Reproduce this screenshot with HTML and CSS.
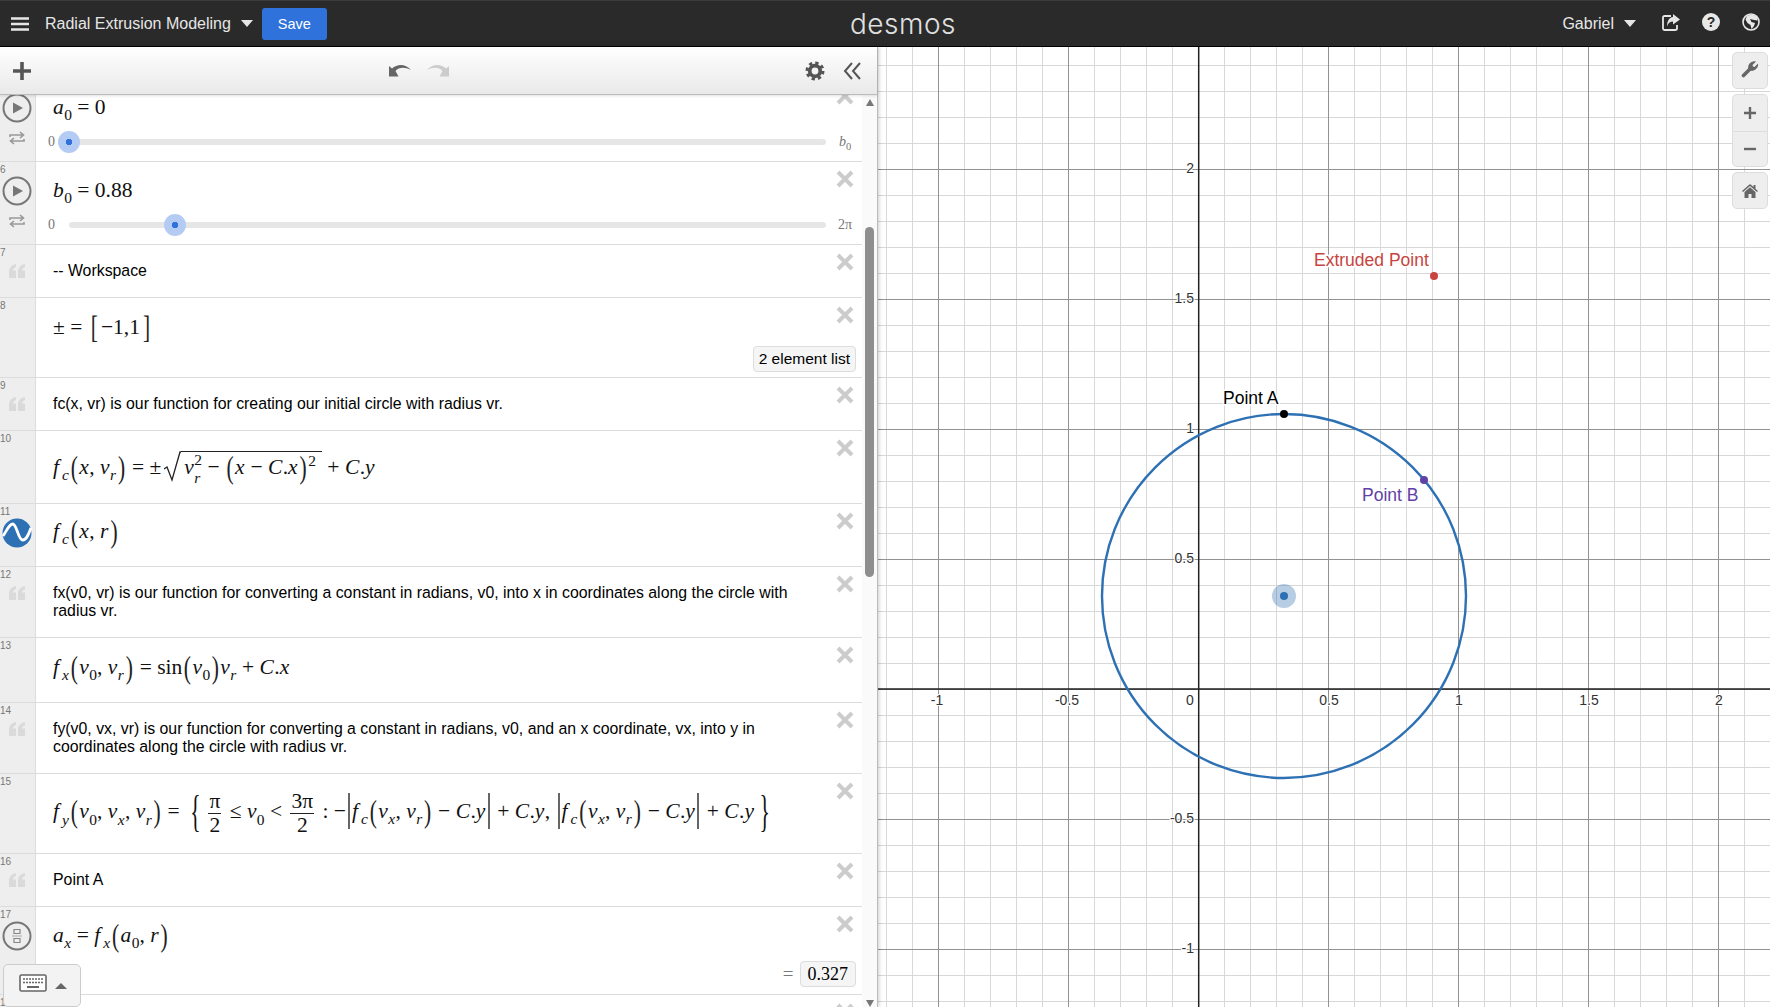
FILE: index.html
```html
<!DOCTYPE html>
<html lang="en">
<head>
  <meta charset="UTF-8" />
  <title>Radial Extrusion Modeling</title>
  <link rel="stylesheet" href="styles.css">
</head>
<body>
  <svg class="defs" width="0" height="0">
    <symbol id="i-x" viewBox="0 0 18 18"><path d="M2 2L16 16M16 2L2 16" fill="none" stroke="#ccc" stroke-width="4"/></symbol>
    <symbol id="i-quote" viewBox="0 0 16 14"><path d="M0 14V8C0 4 2 1 7 0V3C5 4 4 5 4 6.500H7V14ZM9 14V8C9 4 11 1 16 0V3C14 4 13 5 13 6.500H16V14Z" fill="#dadada"/></symbol>
    <symbol id="i-play" viewBox="0 0 30 30"><circle cx="15" cy="15" r="13.500" fill="none" stroke="#777" stroke-width="2"/><path d="M11 9.500L21 15L11 20.500Z" fill="#777"/></symbol>
    <symbol id="i-loop" viewBox="0 0 16 14"><path d="M1 6V4H14M11 1L14.500 4L11 7M15 8V10H2M5 7L1.500 10L5 13" fill="none" stroke="#999" stroke-width="1.600"/></symbol>
  </svg>

  <!-- top bar -->
  <header class="topbar">
    <div class="topbar-left">
      <svg class="icon-menu" width="18" height="14" viewBox="0 0 18 14"><path d="M0 1.500H18M0 7H18M0 12.500H18" stroke="#e6e6e6" stroke-width="2.400"/></svg>
      <span class="doc-title">Radial Extrusion Modeling</span>
      <span class="caret"></span>
      <button class="save-btn">Save</button>
    </div>
    <div class="logo">desmos</div>
    <div class="topbar-right">
      <span class="user-name">Gabriel</span>
      <span class="caret"></span>
      <svg class="top-icon share" width="18" height="18" viewBox="0 0 18 18"><path d="M9 3H2.500C1.700 3 1 3.700 1 4.500V15.500C1 16.300 1.700 17 2.500 17H13C14 17 15 16.300 15 15.500V12" fill="none" stroke="#e6e6e6" stroke-width="1.800"/><path d="M11 1L18 6.500L11 11.500V8.500C8 8.500 6 10 5 13.500C5 8 7 4.500 11 4Z" fill="#e6e6e6"/></svg>
      <svg class="top-icon" width="18" height="18" viewBox="0 0 18 18"><circle cx="9" cy="9" r="9" fill="#e8e8e8"/><text x="9" y="14" class="help-mark">?</text></svg>
      <svg class="top-icon" width="18" height="18" viewBox="0 0 18 18"><circle cx="9" cy="9" r="8" fill="#2a2a2a" stroke="#e8e8e8" stroke-width="1.600"/><path d="M5 2.500L11 1.500L15 4L15.500 7.500L12 7L8 6L9.500 9L13 10L12 13L9.500 16L8.500 12L5.500 10L3.500 6.500Z" fill="#e8e8e8"/></svg>
    </div>
  </header>

  <main class="app">
    <!-- expression panel -->
    <section class="panel">
      <div class="panel-toolbar">
        <svg class="tool-add" width="18" height="18" viewBox="0 0 18 18"><path d="M9 0V18M0 9H18" stroke="#555" stroke-width="3.600"/></svg>
        <div class="tool-history">
          <svg width="22" height="14" viewBox="0 0 22 14"><path d="M0 13.500V3L3 5.500C8 1 16 0 22 7C16 4 10 4 6.500 8L9.500 13.500Z" fill="#666"/></svg>
          <svg width="22" height="14" viewBox="0 0 22 14"><path d="M22 13.500V3L19 5.500C14 1 6 0 0 7C6 4 12 4 15.500 8L12.500 13.500Z" fill="#ccc"/></svg>
        </div>
        <svg class="tool-gear" width="20" height="20" viewBox="0 0 20 20"><circle cx="10" cy="10" r="5.300" fill="none" stroke="#555" stroke-width="3.800"/><circle cx="10" cy="10" r="8" fill="none" stroke="#555" stroke-width="3" stroke-dasharray="3.300 2.980"/></svg>
        <svg class="tool-collapse" width="18" height="18" viewBox="0 0 18 18"><path d="M9 1L2 9L9 17M17 1L10 9L17 17" fill="none" stroke="#555" stroke-width="2"/></svg>
      </div>

      <div class="panel-body">
        <div class="expr-list">
          <div class="expr-scroll">

            <div class="expr h83">
              <div class="gutter"><svg class="ico-circle" width="30" height="30"><use href="#i-play"/></svg><svg class="ico-loop" width="16" height="14"><use href="#i-loop"/></svg></div>
              <div class="content slider-expr">
                <div class="math"><i>a</i><sub>0</sub><span class="op">=</span>0</div>
                <div class="slider">
                  <span class="slider-min">0</span>
                  <div class="track"><span class="handle first"></span></div>
                  <span class="slider-max"><i>b</i><sub>0</sub></span>
                </div>
              </div>
              <svg class="del"><use href="#i-x"/></svg>
            </div>

            <div class="expr h83">
              <div class="gutter"><span class="num">6</span><svg class="ico-circle" width="30" height="30"><use href="#i-play"/></svg><svg class="ico-loop" width="16" height="14"><use href="#i-loop"/></svg></div>
              <div class="content slider-expr">
                <div class="math"><i>b</i><sub>0</sub><span class="op">=</span>0.88</div>
                <div class="slider">
                  <span class="slider-min">0</span>
                  <div class="track"><span class="handle" style="left: 14%"></span></div>
                  <span class="slider-max">2π</span>
                </div>
              </div>
              <svg class="del"><use href="#i-x"/></svg>
            </div>

            <div class="expr h53">
              <div class="gutter"><span class="num">7</span><svg class="ico-quote" width="16" height="14"><use href="#i-quote"/></svg></div>
              <div class="content note">-- Workspace</div>
              <svg class="del"><use href="#i-x"/></svg>
            </div>

            <div class="expr h80">
              <div class="gutter"><span class="num">8</span></div>
              <div class="content list-expr">
                <div class="math">±<span class="op">=</span><span class="tall bracket">[</span>−1,1<span class="tall bracket">]</span></div>
                <div class="output"><span class="badge badge-text">2 element list</span></div>
              </div>
              <svg class="del"><use href="#i-x"/></svg>
            </div>

            <div class="expr h53">
              <div class="gutter"><span class="num">9</span><svg class="ico-quote" width="16" height="14"><use href="#i-quote"/></svg></div>
              <div class="content note">fc(x, vr) is our function for creating our initial circle with radius vr.</div>
              <svg class="del"><use href="#i-x"/></svg>
            </div>

            <div class="expr h73">
              <div class="gutter"><span class="num">10</span></div>
              <div class="content">
                <div class="math"><i class="fn">f</i><sub><i>c</i></sub><span class="tall">(</span><i>x</i>, <i>v</i><sub><i>r</i></sub><span class="tall">)</span><span class="op">=</span>±<span class="sqrt"><svg class="radical" width="17" height="32" viewBox="0 0 17 32"><path d="M0 18L3 16L8 29L16 1H17" fill="none" stroke="#222" stroke-width="1.300"/></svg><span class="radicand"><i>v</i><span class="subsup"><span>2</span><span><i>r</i></span></span><span class="op">−</span><span class="tall">(</span><i>x</i><span class="op">−</span><i>C</i>.<i>x</i><span class="tall">)</span><sup>2</sup></span></span><span class="op">+</span><i>C</i>.<i>y</i></div>
              </div>
              <svg class="del"><use href="#i-x"/></svg>
            </div>

            <div class="expr h63">
              <div class="gutter"><span class="num">11</span>
                <svg class="ico-circle" width="30" height="30" viewBox="0 0 30 30"><circle cx="15" cy="15" r="14.500" fill="#2d70b3"/><path d="M1 18C4 14 7 6 10.700 6C15 6 16 22 20.700 22C25 22 27 15 29 10" fill="none" stroke="#fff" stroke-width="2.800"/></svg>
              </div>
              <div class="content lift-8">
                <div class="math"><i class="fn">f</i><sub><i>c</i></sub><span class="tall">(</span><i>x</i>, <i>r</i><span class="tall">)</span></div>
              </div>
              <svg class="del"><use href="#i-x"/></svg>
            </div>

            <div class="expr h71">
              <div class="gutter"><span class="num">12</span><svg class="ico-quote" width="16" height="14"><use href="#i-quote"/></svg></div>
              <div class="content note">fx(v0, vr) is our function for converting a constant in radians, v0, into x in coordinates along the circle with radius vr.</div>
              <svg class="del"><use href="#i-x"/></svg>
            </div>

            <div class="expr h65">
              <div class="gutter"><span class="num">13</span></div>
              <div class="content lift-6">
                <div class="math"><i class="fn">f</i><sub><i>x</i></sub><span class="tall">(</span><i>v</i><sub>0</sub>, <i>v</i><sub><i>r</i></sub><span class="tall">)</span><span class="op">=</span>sin<span class="tall">(</span><i>v</i><sub>0</sub><span class="tall">)</span><i>v</i><sub><i>r</i></sub><span class="op">+</span><i>C</i>.<i>x</i></div>
              </div>
              <svg class="del"><use href="#i-x"/></svg>
            </div>

            <div class="expr h71">
              <div class="gutter"><span class="num">14</span><svg class="ico-quote" width="16" height="14"><use href="#i-quote"/></svg></div>
              <div class="content note">fy(v0, vx, vr) is our function for converting a constant in radians, v0, and an x coordinate, vx, into y in coordinates along the circle with radius vr.</div>
              <svg class="del"><use href="#i-x"/></svg>
            </div>

            <div class="expr h80">
              <div class="gutter"><span class="num">15</span></div>
              <div class="content">
                <div class="math"><i class="fn">f</i><sub><i>y</i></sub><span class="tall">(</span><i>v</i><sub>0</sub>, <i>v</i><sub><i>x</i></sub>, <i>v</i><sub><i>r</i></sub><span class="tall">)</span><span class="op">=</span><span class="brace">{</span><span class="frac"><span>π</span><span>2</span></span><span class="op">≤</span><i>v</i><sub>0</sub><span class="op">&lt;</span><span class="frac"><span>3π</span><span>2</span></span><span class="op">:</span>−<span class="abs"><i class="fn">f</i><sub><i>c</i></sub><span class="tall">(</span><i>v</i><sub><i>x</i></sub>, <i>v</i><sub><i>r</i></sub><span class="tall">)</span><span class="op">−</span><i>C</i>.<i>y</i></span><span class="op">+</span><i>C</i>.<i>y</i>, <span class="abs"><i class="fn">f</i><sub><i>c</i></sub><span class="tall">(</span><i>v</i><sub><i>x</i></sub>, <i>v</i><sub><i>r</i></sub><span class="tall">)</span><span class="op">−</span><i>C</i>.<i>y</i></span><span class="op">+</span><i>C</i>.<i>y</i><span class="brace">}</span></div>
              </div>
              <svg class="del"><use href="#i-x"/></svg>
            </div>

            <div class="expr h53">
              <div class="gutter"><span class="num">16</span><svg class="ico-quote" width="16" height="14"><use href="#i-quote"/></svg></div>
              <div class="content note">Point A</div>
              <svg class="del"><use href="#i-x"/></svg>
            </div>

            <div class="expr h88">
              <div class="gutter"><span class="num">17</span>
                <svg class="ico-circle" width="30" height="30" viewBox="0 0 30 30"><circle cx="15" cy="15" r="13.500" fill="none" stroke="#777" stroke-width="2"/><path d="M12 8.500H18V12.500H12ZM12 17.500H18V21.500H12Z" fill="none" stroke="#888" stroke-width="1.200"/><path d="M10 15H20" stroke="#aaa" stroke-width="1"/></svg>
              </div>
              <div class="content list-expr value-expr">
                <div class="math"><i>a</i><sub><i>x</i></sub><span class="op">=</span><i class="fn">f</i><sub><i>x</i></sub><span class="tall">(</span><i>a</i><sub>0</sub>, <i>r</i><span class="tall">)</span></div>
                <div class="output"><span class="equals">=</span><span class="badge badge-num">0.327</span></div>
              </div>
              <svg class="del"><use href="#i-x"/></svg>
            </div>

            <div class="expr h53">
              <div class="gutter"><span class="num">18</span></div>
              <div class="content"></div>
              <svg class="del"><use href="#i-x"/></svg>
            </div>

          </div>
          <button class="keyboard-btn">
            <svg class="kb-icon" width="28" height="18" viewBox="0 0 28 18"><rect x="1" y="1" width="26" height="16" rx="1.500" fill="#fff" stroke="#666" stroke-width="1.600"/><path d="M4 5H24M4 8.500H24" stroke="#666" stroke-width="1.600" stroke-dasharray="2 1"/><path d="M8 13H20" stroke="#666" stroke-width="2"/></svg>
            <span class="keyboard-caret"></span>
          </button>
        </div>

        <div class="scrollbar">
          <span class="arrow-up"></span>
          <span class="thumb"></span>
          <span class="arrow-down"></span>
        </div>
      </div>
    </section>

    <!-- graph paper -->
    <section class="graph">
      <svg class="paper" viewBox="878 47 892 960" width="892" height="960">
        <defs>
          <pattern id="minor" patternUnits="userSpaceOnUse" x="1198" y="689" width="26" height="26"><path d="M0.500 0V26M0 0.500H26" fill="none" stroke="#d8d8d8"/></pattern>
          <pattern id="major" patternUnits="userSpaceOnUse" x="1198" y="689" width="130" height="130"><path d="M0.500 0V130M0 0.500H130" fill="none" stroke="#929292"/></pattern>
        </defs>
        <rect x="878" y="47" width="892" height="960" fill="#fff"/>
        <rect x="878" y="47" width="892" height="960" fill="url(#minor)"/>
        <rect x="878" y="47" width="892" height="960" fill="url(#major)"/>
        <path d="M1198.700 47V1007M878 689H1770" stroke="#222" stroke-width="1.500"/>

        <g class="tick tick-y">
          <text x="1194" y="173">2</text>
          <text x="1194" y="303">1.5</text>
          <text x="1194" y="433">1</text>
          <text x="1194" y="563">0.5</text>
          <text x="1194" y="823">-0.5</text>
          <text x="1194" y="953">-1</text>
        </g>
        <g class="tick tick-x">
          <text x="937" y="705">-1</text>
          <text x="1067" y="705">-0.5</text>
          <text x="1190" y="705">0</text>
          <text x="1329" y="705">0.5</text>
          <text x="1459" y="705">1</text>
          <text x="1589" y="705">1.5</text>
          <text x="1719" y="705">2</text>
        </g>

        <circle cx="1284" cy="596" r="182" fill="none" stroke="#2d70b3" stroke-width="2.400"/>
        <circle cx="1284" cy="596" r="12" fill="#2d70b3" opacity="0.35"/>
        <circle cx="1284" cy="596" r="4" fill="#2d70b3"/>
        <circle cx="1284" cy="414" r="4" fill="#000"/>
        <circle cx="1424" cy="480" r="4" fill="#6042a6"/>
        <circle cx="1434" cy="276" r="4" fill="#c74440"/>
        <text x="1223" y="404" class="pt-label">Point A</text>
        <text x="1362" y="501" class="pt-label label-b">Point B</text>
        <text x="1314" y="266" class="pt-label label-red">Extruded Point</text>
      </svg>

      <div class="graph-controls">
        <button class="ctl-btn">
          <svg class="wrench" width="18" height="18" viewBox="0 0 18 18"><path d="M2.500 15.500L9 9" stroke="#666" stroke-width="3.600" stroke-linecap="round"/><path d="M7.500 9.500C6 5 10 .5 15 1.500L11.500 5L12 6.500L13.500 7L17 3.500C18 8 13 12 8.500 10.500Z" fill="#666"/></svg>
        </button>
        <div class="ctl-group">
          <button class="ctl-btn"><svg width="12" height="12" viewBox="0 0 12 12"><path d="M6 0V12M0 6H12" stroke="#666" stroke-width="2.400"/></svg></button>
          <button class="ctl-btn"><svg width="12" height="12" viewBox="0 0 12 12"><path d="M0 6H12" stroke="#666" stroke-width="2.400"/></svg></button>
        </div>
        <button class="ctl-btn">
          <svg width="16" height="14" viewBox="0 0 16 14"><path d="M0 7L8 0L11.500 3V1H13.500V4.800L16 7L15 8L8 2L1 8Z" fill="#666"/><path d="M2.500 8L8 3.300L13.500 8V14H9.500V10H6.500V14H2.500Z" fill="#666"/></svg>
        </button>
      </div>
    </section>
  </main>
</body>
</html>
```

FILE: styles.css
```css
* {
  box-sizing: border-box;
}

html, body {
  margin: 0;
  height: 100%;
  overflow: hidden;
}

body {
  display: flex;
  flex-direction: column;
  font-family: "Liberation Sans", Arial, sans-serif;
  color: #000;
}

.defs {
  position: absolute;
}

button {
  font-family: inherit;
}

/* top bar */
.topbar {
  height: 47px;
  flex: none;
  display: flex;
  align-items: center;
  background: #2a2a2a;
  border-top: 1px solid #3c3c3c;
  border-bottom: 1px solid #000;
  color: #e6e6e6;
}

.topbar-left {
  width: 850px;
  padding-left: 11px;
  display: flex;
  align-items: center;
}

.doc-title {
  margin-left: 16px;
  font-size: 16px;
}

.caret {
  width: 0;
  height: 0;
  margin-left: 10px;
  border-left: 6.5px solid transparent;
  border-right: 6.5px solid transparent;
  border-top: 7px solid #e6e6e6;
}

.save-btn {
  width: 65px;
  height: 32px;
  margin-left: 9px;
  border: none;
  border-radius: 3px;
  background: #2f72dc;
  color: #fff;
  font-size: 14.5px;
}

.logo {
  font-family: Inter, sans-serif;
  font-size: 28px;
  font-weight: 350;
  letter-spacing: 0.5px;
  color: #e0e0e0;
  line-height: 1;
}

.topbar-right {
  margin-left: auto;
  padding-right: 10px;
  display: flex;
  align-items: center;
}

.user-name {
  font-size: 16px;
}

.top-icon {
  margin: -3px 0 0 22px;
}

.top-icon.share {
  margin-left: 26px;
}

.help-mark {
  font: bold 14px "Liberation Sans", sans-serif;
  text-anchor: middle;
  fill: #2a2a2a;
}

/* layout */
.app {
  flex: 1;
  min-height: 0;
  display: flex;
}

.panel {
  width: 878px;
  flex: none;
  display: flex;
  flex-direction: column;
  border-right: 1px solid #bbb;
  box-shadow: 1px 0 4px rgba(0, 0, 0, 0.2);
  z-index: 2;
  background: #fff;
}

.panel-toolbar {
  height: 48px;
  flex: none;
  position: relative;
  display: flex;
  align-items: center;
  padding: 0 16px 0 13px;
  background: linear-gradient(#fff, #e9e9e9);
  border-bottom: 1px solid #bbb;
  box-shadow: 0 1px 3px rgba(0, 0, 0, 0.12);
  z-index: 3;
}

.tool-history {
  display: flex;
  gap: 16px;
  margin-left: 358px;
  margin-top: -2px;
}

.tool-gear {
  margin-left: auto;
  margin-right: -1px;
}

.tool-collapse {
  margin-left: 19px;
}

.panel-body {
  flex: 1;
  min-height: 0;
  display: flex;
}

.expr-list {
  flex: 1;
  position: relative;
  overflow: hidden;
}

.expr-scroll {
  margin-top: -16px;
}

/* expression rows */
.expr {
  position: relative;
  display: flex;
  border-bottom: 1px solid #dcdcdc;
  overflow: hidden;
}

.h53 { height: 53px; }
.h63 { height: 63px; }
.h65 { height: 65px; }
.h71 { height: 71px; }
.h73 { height: 73px; }
.h80 { height: 80px; }
.h83 { height: 83px; }
.h88 { height: 88px; }

.gutter {
  width: 36px;
  flex: none;
  position: relative;
  display: flex;
  flex-direction: column;
  align-items: center;
  padding-top: 14px;
  background: #eee;
  border-right: 1px solid #ddd;
}

.num {
  position: absolute;
  left: 0;
  top: 2px;
  font-size: 10px;
  color: #777;
}

.ico-circle {
  display: block;
  margin-right: 2px;
}

.ico-loop {
  display: block;
  margin: 8px 2px 0 0;
}

.ico-quote {
  display: block;
  margin: 5px 1px 0 0;
}

.del {
  position: absolute;
  right: 8px;
  top: 8px;
  width: 18px;
  height: 18px;
}

.content {
  flex: 1;
  min-width: 0;
  padding: 0 6px 0 17px;
  display: flex;
  flex-direction: column;
  justify-content: center;
}

.lift-8 {
  padding-bottom: 8px;
}

.lift-6 {
  padding-bottom: 6px;
}

.note {
  padding-right: 40px;
  font-size: 15.85px;
  line-height: 18px;
}

/* math */
.math {
  font-family: "Liberation Serif", "Times New Roman", serif;
  font-size: 21.5px;
  line-height: 30px;
  white-space: nowrap;
  color: #111;
}

.math i {
  letter-spacing: 0.02em;
}

.math sub,
.math sup {
  font-size: 0.72em;
  line-height: 0;
}

.math sub {
  vertical-align: -0.4em;
}

.math sup {
  vertical-align: 0.55em;
}

.fn {
  margin-right: 0.12em;
}

.op {
  margin: 0 0.25em;
}

.tall {
  display: inline-block;
  font-weight: 300;
  transform: scale(1, 1.5);
  margin: 0 1.5px;
  color: #222;
}

.bracket {
  margin: 0 3px;
}

.brace {
  display: inline-block;
  transform: scale(1, 2.1);
  margin: 0 5px;
}

.frac {
  display: inline-flex;
  flex-direction: column;
  align-items: center;
  vertical-align: middle;
  margin: 0 3px;
  line-height: 23px;
}

.frac span:first-child {
  border-bottom: 1px solid #222;
  padding: 0 1px;
  align-self: stretch;
  text-align: center;
}

.abs {
  display: inline-block;
  margin: 0 2px;
  padding: 0 2px;
  border-left: 2px solid #666;
  border-right: 2px solid #666;
  line-height: 36px;
}

.sqrt {
  display: inline-block;
  vertical-align: baseline;
  margin-left: 3px;
}

.radical {
  vertical-align: -9px;
}

.radicand {
  display: inline-block;
  border-top: 1px solid #222;
  padding: 0 6px 0 3px;
  line-height: 30px;
}

.subsup {
  display: inline-flex;
  flex-direction: column;
  vertical-align: middle;
  font-size: 0.72em;
  line-height: 18px;
  margin: -4px 0;
}

/* sliders */
.slider-expr {
  justify-content: flex-start;
  padding-top: 13px;
}

.slider {
  display: flex;
  align-items: center;
  margin: 12px 0 0 -5px;
  font-family: "Liberation Serif", serif;
  color: #777;
}

.slider-min {
  width: 21px;
  font-size: 14px;
}

.track {
  flex: 1;
  position: relative;
  height: 6px;
  border-radius: 3px;
  background: #e6e6e6;
}

.handle {
  position: absolute;
  top: 50%;
  width: 22px;
  height: 22px;
  margin: -11px 0 0 -11px;
  border-radius: 50%;
  background: radial-gradient(circle, #2f72dc 0 3px, #b4cbf3 3.5px);
}

.handle.first {
  left: 0;
}

.slider-max {
  width: 22px;
  margin-left: 8px;
  text-align: center;
  font-size: 14px;
}

.slider-max sub {
  font-size: 0.75em;
  line-height: 0;
}

/* list and value outputs */
.list-expr {
  justify-content: flex-start;
  padding-top: 14px;
}

.value-expr {
  padding-top: 13px;
}

.output {
  display: flex;
  justify-content: flex-end;
  align-items: center;
  margin-top: 4px;
}

.value-expr .output {
  margin-top: 11px;
}

.badge {
  height: 26px;
  display: inline-flex;
  align-items: center;
  padding: 0 5px;
  background: #f5f5f5;
  border: 1px solid #ddd;
  border-radius: 4px;
  font-size: 15.5px;
}

.badge-num {
  padding: 0 7px;
  font-family: "Liberation Serif", serif;
  font-size: 18px;
}

.equals {
  margin-right: 6px;
  font-family: "Liberation Serif", serif;
  font-size: 19px;
  color: #777;
}

/* keyboard toggle */
.keyboard-btn {
  position: absolute;
  left: 3px;
  bottom: 0;
  width: 78px;
  height: 43px;
  display: flex;
  align-items: center;
  gap: 8px;
  padding: 0 0 0 15px;
  background: #f3f3f3;
  border: 1px solid #ccc;
  border-radius: 5px;
}

.kb-icon {
  margin-bottom: 5px;
}

.keyboard-caret {
  width: 0;
  height: 0;
  border-left: 6px solid transparent;
  border-right: 6px solid transparent;
  border-bottom: 6px solid #666;
}

/* scrollbar */
.scrollbar {
  width: 15px;
  flex: none;
  display: flex;
  flex-direction: column;
  align-items: center;
  background: #fafafa;
}

.arrow-up,
.arrow-down {
  width: 0;
  height: 0;
  border-left: 4.5px solid transparent;
  border-right: 4.5px solid transparent;
}

.arrow-up {
  margin-top: 4px;
  border-bottom: 7px solid #777;
}

.arrow-down {
  margin-top: auto;
  border-top: 7px solid #777;
}

.thumb {
  width: 9px;
  height: 350px;
  margin-top: 121px;
  border-radius: 5px;
  background: #8e8e8e;
}

/* graph */
.graph {
  flex: 1;
  position: relative;
  overflow: hidden;
}

.paper {
  display: block;
}

.tick text {
  font: 14px "Liberation Sans", sans-serif;
  fill: #333;
  paint-order: stroke;
  stroke: #fff;
  stroke-width: 2px;
}

.tick-y text {
  text-anchor: end;
}

.tick-x text {
  text-anchor: middle;
}

.pt-label {
  font: 17.5px "Liberation Sans", sans-serif;
  fill: #000;
  paint-order: stroke;
  stroke: #fff;
  stroke-width: 3px;
}

.label-b {
  fill: #6042a6;
}

.label-red {
  fill: #c74440;
}

.graph-controls {
  position: absolute;
  top: 5px;
  right: 2px;
  width: 36px;
  display: flex;
  flex-direction: column;
  gap: 5px;
}

.ctl-btn {
  width: 36px;
  height: 37px;
  display: flex;
  align-items: center;
  justify-content: center;
  padding: 0;
  background: #eee;
  border: 1px solid #ddd;
  border-radius: 5px;
}

.wrench {
  margin-bottom: 3px;
}

.ctl-group .ctl-btn:first-child {
  border-bottom: none;
  border-radius: 5px 5px 0 0;
}

.ctl-group .ctl-btn:last-child {
  height: 36px;
  border-radius: 0 0 5px 5px;
}
```
